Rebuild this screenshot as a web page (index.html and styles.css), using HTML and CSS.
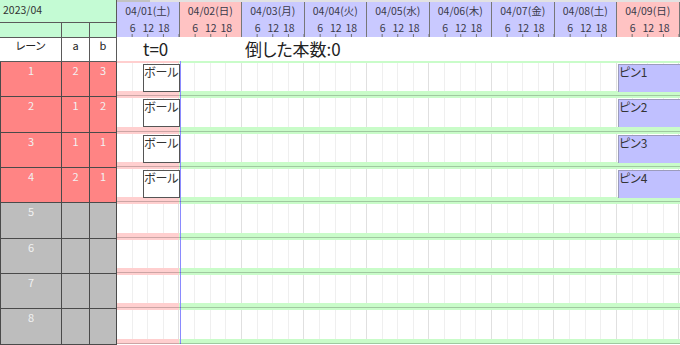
FILE: index.html
```html
<!DOCTYPE html>
<html lang="ja">
<head>
    <meta charset="UTF-8"/>
    <meta name="viewport" content="width=device-width,initial-scale=1.0"/>
    <title>ボウリング シミュレーション</title>
    <link rel="stylesheet" href="styles.css">
</head>
<body>
<div class="sheet">
    <div class="side">
        <div class="month">2023/04</div>
        <div class="row sub">
            <div></div>
            <div></div>
            <div></div>
        </div>
        <div class="row colhead">
            <div>レーン</div>
            <div>a</div>
            <div>b</div>
        </div>
        <div class="row lane active"><div>1</div><div>2</div><div>3</div></div>
        <div class="row lane active"><div>2</div><div>1</div><div>2</div></div>
        <div class="row lane active"><div>3</div><div>1</div><div>1</div></div>
        <div class="row lane active"><div>4</div><div>2</div><div>1</div></div>
        <div class="row lane"><div>5</div><div></div><div></div></div>
        <div class="row lane"><div>6</div><div></div><div></div></div>
        <div class="row lane"><div>7</div><div></div><div></div></div>
        <div class="row lane"><div>8</div><div></div><div></div></div>
    </div>

    <div class="chart">
        <div class="scroll"><span class="thumb"></span></div>
        <div class="days">
            <div class="day"><div class="date">04/01(土)</div><div class="hrs"><span>6</span><span>12</span><span>18</span></div></div>
            <div class="day sun"><div class="date">04/02(日)</div><div class="hrs"><span>6</span><span>12</span><span>18</span></div></div>
            <div class="day"><div class="date">04/03(月)</div><div class="hrs"><span>6</span><span>12</span><span>18</span></div></div>
            <div class="day"><div class="date">04/04(火)</div><div class="hrs"><span>6</span><span>12</span><span>18</span></div></div>
            <div class="day"><div class="date">04/05(水)</div><div class="hrs"><span>6</span><span>12</span><span>18</span></div></div>
            <div class="day"><div class="date">04/06(木)</div><div class="hrs"><span>6</span><span>12</span><span>18</span></div></div>
            <div class="day"><div class="date">04/07(金)</div><div class="hrs"><span>6</span><span>12</span><span>18</span></div></div>
            <div class="day"><div class="date">04/08(土)</div><div class="hrs"><span>6</span><span>12</span><span>18</span></div></div>
            <div class="day sun"><div class="date">04/09(日)</div><div class="hrs"><span>6</span><span>12</span><span>18</span></div></div>
        </div>

        <div class="trow">
            <span class="t">t=0</span>
            <span>倒した本数:0</span>
        </div>

        <div class="track"><div class="ball">ボール</div><div class="pin">ピン1</div></div>
        <div class="track"><div class="ball">ボール</div><div class="pin">ピン2</div></div>
        <div class="track"><div class="ball">ボール</div><div class="pin">ピン3</div></div>
        <div class="track"><div class="ball">ボール</div><div class="pin">ピン4</div></div>
        <div class="track"></div>
        <div class="track"></div>
        <div class="track"></div>
        <div class="track"></div>
    </div>
</div>
</body>
</html>
```

FILE: styles.css
```css
* {
    margin: 0;
    padding: 0;
    box-sizing: border-box
}

body {
    font-family: "Noto Sans CJK JP", "Noto Sans", sans-serif;
    font-feature-settings: "palt";
    color: #333;
    background: #fff;
    overflow: hidden
}

.sheet {
    display: flex;
    width: 680px;
    height: 345px;
    overflow: hidden
}

/* left panel */

.side {
    width: 117px;
    flex: none;
    display: flex;
    flex-direction: column
}

.month {
    height: 23px;
    background: #c4fbd4;
    border-right: 1px solid #5a5a5a;
    border-bottom: 1px solid #5a5a5a;
    font-size: 10.5px;
    line-height: 14px;
    padding: 3px 0 0 3px
}

.row {
    display: grid;
    grid-template-columns: 62px 28px 27px
}

.row > div {
    border-right: 1px solid #5a5a5a;
    border-bottom: 1px solid #5a5a5a;
    text-align: center
}

.sub {
    height: 15px
}

.sub > div {
    background: #c4fbd4
}

.colhead {
    height: 24px;
    font-size: 11px;
    line-height: 14px;
    color: #222
}

.lane {
    height: 35.33px;
    font-size: 11px;
    line-height: 14px;
    color: #f2f2f2
}

.lane > div {
    background: #bdbdbd;
    padding-top: 1px;
    border-color: #4a4a4a
}

.lane > div:first-child {
    border-left: 1px solid #4a4a4a
}

.lane.active > div {
    background: #ff8484
}

/* chart */

.chart {
    flex: 1;
    overflow: hidden;
    display: flex;
    flex-direction: column
}

.scroll {
    height: 2px;
    background: #e2e2e2;
    display: flex
}

.thumb {
    width: 33px;
    background: #c2c2c2
}

.days {
    display: grid;
    grid-template-columns: repeat(9, 62.5px);
    height: 35px;
    border-bottom: 1px solid #9a9a9a
}

.day {
    background: #c9c9ff;
    border-right: 1px solid #777;
    text-align: center;
    color: #3a3a4a
}

.day.sun {
    background: #ffc3c3
}

.date {
    font-size: 10.5px;
    line-height: 16px;
    padding-top: 1px;
    height: 18px
}

.hrs {
    display: flex;
    height: 17px;
    padding: 1px 0 0 7.8px;
    font-size: 10.5px;
    line-height: 14px;
    background: linear-gradient(to right, transparent 14.625px, #6a6a6a 14.625px) left bottom / 15.625px 3px repeat-x
}

.hrs span {
    width: 15.625px;
    flex: none;
    text-align: center
}

.trow {
    height: 24px;
    display: flex;
    align-items: center;
    padding-left: 26px;
    font-size: 17px;
    line-height: 22px;
    color: #222
}

.t {
    width: 102px
}

.track {
    height: 35.33px;
    flex: none;
    display: flex;
    align-items: flex-start;
    padding-top: 3px;
    border-bottom: 1px solid rgba(0, 0, 0, .2);
    background: linear-gradient(to right, transparent 63px, #8a8aff 63px, #8a8aff 64px, transparent 64px),
    linear-gradient(to right, #ffcfcf 62.5px, #c9fcc9 62.5px) left bottom / 100% 5px no-repeat,
    linear-gradient(to right, #ffcfcf 62.5px, #c9fcc9 62.5px) left top / 100% 2px no-repeat,
    repeating-linear-gradient(to right, transparent 0 61.5px, #e0e0e0 61.5px 62.5px),
    repeating-linear-gradient(to right, transparent 0 14.625px, #efefef 14.625px 15.625px),
    #fff;
    background-origin: border-box
}

.ball {
    margin-left: 26px;
    width: 37px;
    height: 28px;
    border: 1px solid #555;
    background: #fff;
    font-size: 12px;
    line-height: 14px;
    color: #333
}

.pin {
    margin-left: auto;
    width: 62px;
    height: 28px;
    background: #c0c0ff;
    border-left: 1px solid #9c9cbc;
    border-top: 1px solid #9c9cbc;
    font-size: 12px;
    line-height: 14px;
    color: #333
}
```
